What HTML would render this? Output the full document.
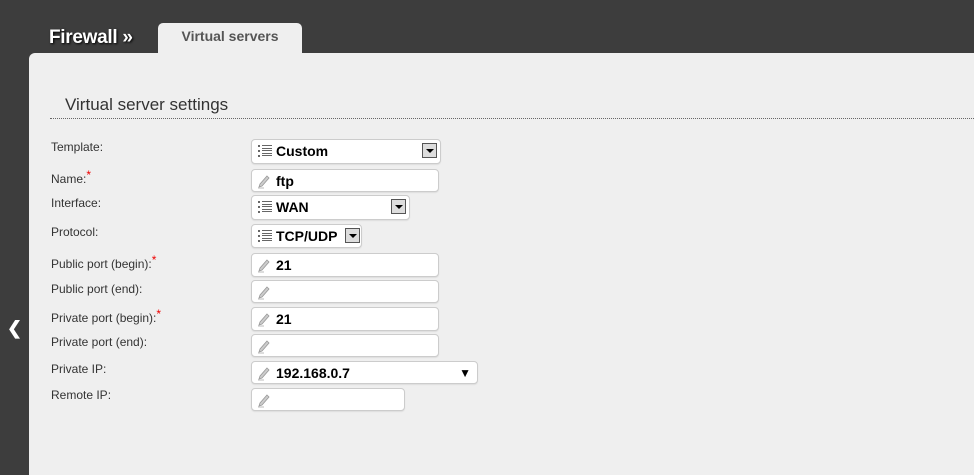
<!DOCTYPE html><html><head><style>
body{margin:0;width:974px;height:475px;background:#3d3d3d;font-family:"Liberation Sans",sans-serif;position:relative;overflow:hidden}
.t{position:absolute;left:49px;top:27px;color:#fff;font-weight:bold;font-size:19px;text-shadow:1px 1px 2px #000;letter-spacing:-0.3px}
.tab{position:absolute;left:158px;top:23px;width:144px;height:32px;background:#efefef;border-radius:5px 5px 0 0;text-align:center;font-weight:bold;font-size:14px;color:#555;line-height:26px}
.p{position:absolute;left:29px;top:53px;right:0;bottom:0;background:#efefef;border-radius:6px 0 0 0}
.h{position:absolute;left:65px;top:95px;font-size:17px;color:#333}
.ln{position:absolute;left:50px;right:0;top:118px;border-top:1px dotted #666}
.l{position:absolute;left:51px;font-size:12px;color:#333}
.l i{color:#e00;font-style:normal;position:relative;top:-4px}
.f{position:absolute;left:251px;background:#fff;border:1px solid #ccc;border-radius:4px;box-shadow:0 1px 1px #ddd;box-sizing:border-box;font-weight:bold;font-size:14px;color:#000;padding-left:24px;line-height:22px}
.f svg{position:absolute;left:6px;top:5px}
.dd{position:absolute;right:3px;top:3px;width:15px;height:15px;border:1px solid #555;background:#ddd;box-sizing:border-box}
.dd:after{content:"";position:absolute;left:3px;top:5px;border:4px solid transparent;border-top:4px solid #000;border-bottom:0}
.arr{position:absolute;left:7px;top:318px;color:#fff;font-size:18px;font-weight:bold}
</style></head><body>
<div class="t">Firewall »</div>
<div class="tab">Virtual servers</div>
<div class="p"></div>
<div class="arr">&#10094;</div>
<div class="h">Virtual server settings</div>
<div class="ln"></div>
<svg width="0" height="0" style="position:absolute"><defs>
<symbol id="li" viewBox="0 0 14 12"><g fill="#666"><rect x="0" y="0" width="2" height="2"/><rect x="0" y="5" width="2" height="2"/><rect x="0" y="10" width="2" height="2"/><rect x="4" y="0" width="10" height="1"/><rect x="4" y="3" width="10" height="1"/><rect x="4" y="5" width="10" height="1"/><rect x="4" y="8" width="10" height="1"/><rect x="4" y="10" width="10" height="1"/></g></symbol>
<symbol id="pe" viewBox="0 0 12 14"><path d="M9 1l2 2-7 8-3 1 1-3z" fill="#ccc" stroke="#999" stroke-width=".8"/><path d="M0 13h6" stroke="#bbb"/></symbol></defs></svg>
<div class="l" style="top:140px">Template:</div>
<div class="f" style="top:139px;width:190px;height:25px"><svg width="14" height="12"><use href="#li"/></svg>Custom<span class="dd"></span></div>
<div class="l" style="top:172px">Name:<i>*</i></div>
<div class="f" style="top:169px;width:188px;height:23px"><svg width="12" height="14"><use href="#pe"/></svg>ftp</div>
<div class="l" style="top:196px">Interface:</div>
<div class="f" style="top:195px;width:159px;height:25px"><svg width="14" height="12"><use href="#li"/></svg>WAN<span class="dd"></span></div>
<div class="l" style="top:225px">Protocol:</div>
<div class="f" style="top:224px;width:111px;height:24px"><svg width="14" height="12"><use href="#li"/></svg>TCP/UDP<span class="dd" style="right:1px"></span></div>
<div class="l" style="top:257px">Public port (begin):<i>*</i></div>
<div class="f" style="top:253px;width:188px;height:24px"><svg width="12" height="14"><use href="#pe"/></svg>21</div>
<div class="l" style="top:282px">Public port (end):</div>
<div class="f" style="top:280px;width:188px;height:23px"><svg width="12" height="14"><use href="#pe"/></svg></div>
<div class="l" style="top:311px">Private port (begin):<i>*</i></div>
<div class="f" style="top:307px;width:188px;height:24px"><svg width="12" height="14"><use href="#pe"/></svg>21</div>
<div class="l" style="top:335px">Private port (end):</div>
<div class="f" style="top:334px;width:188px;height:23px"><svg width="12" height="14"><use href="#pe"/></svg></div>
<div class="l" style="top:362px">Private IP:</div>
<div class="f" style="top:361px;width:227px;height:23px"><svg width="12" height="14"><use href="#pe"/></svg>192.168.0.7<span style="position:absolute;right:6px;font-size:12px">&#9660;</span></div>
<div class="l" style="top:388px">Remote IP:</div>
<div class="f" style="top:388px;width:154px;height:23px"><svg width="12" height="14"><use href="#pe"/></svg></div>
</body></html>
